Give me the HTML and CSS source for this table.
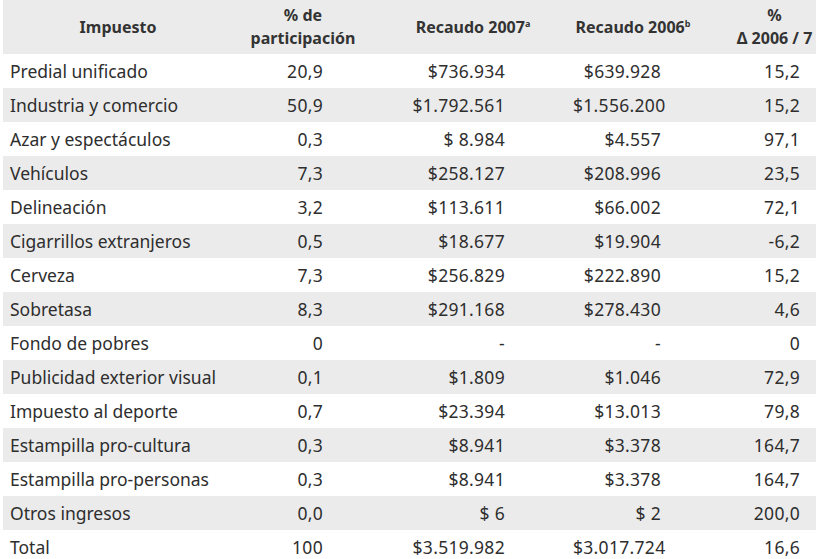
FILE: index.html
```html
<!DOCTYPE html>
<html lang="es">
<head>
<meta charset="utf-8">
<title>Recaudo</title>
<link rel="stylesheet" href="styles.css">
</head>
<body>
<div class="table">
  <div class="row head">
    <div class="c c1">Impuesto</div>
    <div class="c c2">% de<br>participación</div>
    <div class="c c3">Recaudo 2007<sup>a</sup></div>
    <div class="c c4">Recaudo 2006<sup>b</sup></div>
    <div class="c c5">%<br>Δ 2006 / 7</div>
  </div>
  <div class="row"><div class="c c1">Predial unificado</div><div class="c c2">20,9</div><div class="c c3">$736.934</div><div class="c c4">$639.928</div><div class="c c5">15,2</div></div>
  <div class="row alt"><div class="c c1">Industria y comercio</div><div class="c c2">50,9</div><div class="c c3">$1.792.561</div><div class="c c4">$1.556.200</div><div class="c c5">15,2</div></div>
  <div class="row"><div class="c c1">Azar y espectáculos</div><div class="c c2">0,3</div><div class="c c3">$ 8.984</div><div class="c c4">$4.557</div><div class="c c5">97,1</div></div>
  <div class="row alt"><div class="c c1">Vehículos</div><div class="c c2">7,3</div><div class="c c3">$258.127</div><div class="c c4">$208.996</div><div class="c c5">23,5</div></div>
  <div class="row"><div class="c c1">Delineación</div><div class="c c2">3,2</div><div class="c c3">$113.611</div><div class="c c4">$66.002</div><div class="c c5">72,1</div></div>
  <div class="row alt"><div class="c c1">Cigarrillos extranjeros</div><div class="c c2">0,5</div><div class="c c3">$18.677</div><div class="c c4">$19.904</div><div class="c c5">-6,2</div></div>
  <div class="row"><div class="c c1">Cerveza</div><div class="c c2">7,3</div><div class="c c3">$256.829</div><div class="c c4">$222.890</div><div class="c c5">15,2</div></div>
  <div class="row alt"><div class="c c1">Sobretasa</div><div class="c c2">8,3</div><div class="c c3">$291.168</div><div class="c c4">$278.430</div><div class="c c5">4,6</div></div>
  <div class="row"><div class="c c1">Fondo de pobres</div><div class="c c2">0</div><div class="c c3">-</div><div class="c c4">-</div><div class="c c5">0</div></div>
  <div class="row alt"><div class="c c1">Publicidad exterior visual</div><div class="c c2">0,1</div><div class="c c3">$1.809</div><div class="c c4">$1.046</div><div class="c c5">72,9</div></div>
  <div class="row"><div class="c c1">Impuesto al deporte</div><div class="c c2">0,7</div><div class="c c3">$23.394</div><div class="c c4">$13.013</div><div class="c c5">79,8</div></div>
  <div class="row alt"><div class="c c1">Estampilla pro-cultura</div><div class="c c2">0,3</div><div class="c c3">$8.941</div><div class="c c4">$3.378</div><div class="c c5">164,7</div></div>
  <div class="row"><div class="c c1">Estampilla pro-personas</div><div class="c c2">0,3</div><div class="c c3">$8.941</div><div class="c c4">$3.378</div><div class="c c5">164,7</div></div>
  <div class="row alt"><div class="c c1">Otros ingresos</div><div class="c c2">0,0</div><div class="c c3">$ 6</div><div class="c c4">$ 2</div><div class="c c5">200,0</div></div>
  <div class="row"><div class="c c1">Total</div><div class="c c2">100</div><div class="c c3">$3.519.982</div><div class="c c4">$3.017.724</div><div class="c c5">16,6</div></div>
</div>
</body>
</html>
```
FILE: styles.css
```css
html, body {
  margin: 0;
  padding: 0;
  background: #ffffff;
}
body {
  font-family: "Noto Sans", sans-serif;
  color: #2e2e2e;
  overflow: hidden;
}
.table {
  margin-left: 3px;
  width: 813px;
}
.row {
  display: grid;
  grid-template-columns: 230px 140px 200px 120px 123px;
  height: 34px;
  align-items: center;
  font-size: 17.5px;
}
.row.alt, .row.head {
  background: #ebebeb;
}
.row.head {
  height: 54px;
  font-size: 16px;
  font-weight: bold;
  line-height: 23px;
  color: #333;
}
.head .c {
  text-align: center;
  padding: 0;
  letter-spacing: 0;
}
.head .c5 {
  padding-left: 40px;
}
.head sup {
  font-size: 9px;
  vertical-align: 6px;
  line-height: 0;
}
.c {
  white-space: nowrap;
  text-align: right;
  letter-spacing: 0.3px;
}
.c1 {
  text-align: left;
  padding-left: 7px;
  letter-spacing: 0;
}
.c2 { padding-right: 50px; }
.c3 { padding-right: 68px; }
.c4 { padding-right: 32px; }
.c5 { padding-right: 16px; }
```
